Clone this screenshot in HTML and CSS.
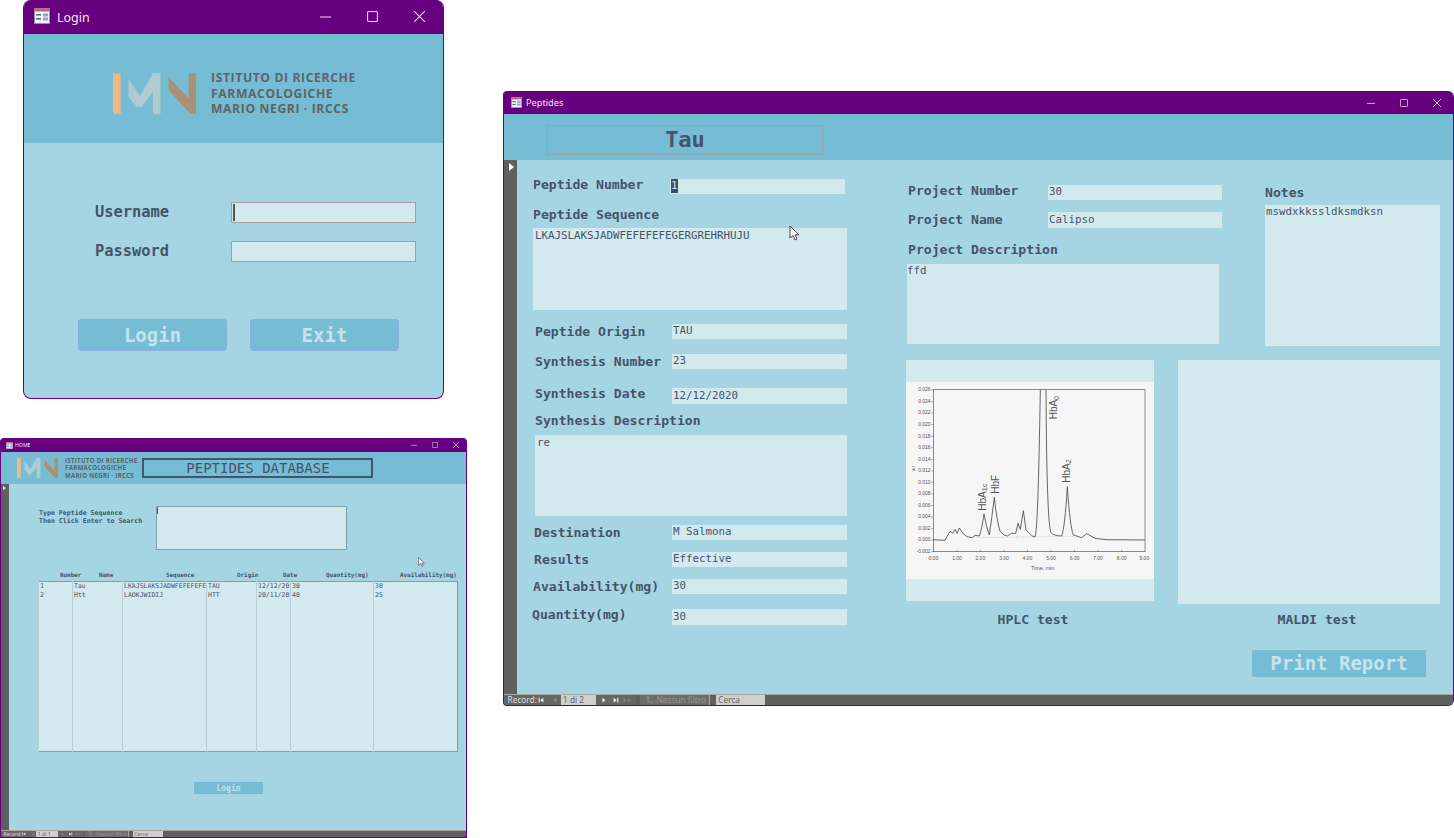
FILE: index.html
```html
<!DOCTYPE html>
<html lang="en">
<head>
    <meta charset="UTF-8">
    <meta name="viewport" content="width=device-width, initial-scale=1.0">
    <title>Peptides Database</title>
    <link rel="stylesheet" href="styles.css">
</head>
<body>

    <svg class="defs" aria-hidden="true">
        <symbol id="form-icon" viewBox="0 0 16 16">
            <rect x="0.5" y="0.5" width="15" height="15" fill="#f4f6fb" stroke="#8c93a8"/>
            <rect x="0.5" y="0.5" width="15" height="3" fill="#c8607c"/>
            <rect x="2" y="6" width="5" height="1.6" fill="#5a6a8c"/>
            <rect x="2" y="10" width="5" height="1.6" fill="#5a6a8c"/>
            <rect x="9" y="5.5" width="5" height="3" fill="#8ea4c8"/>
            <rect x="9" y="9.5" width="5" height="3" fill="#8ea4c8"/>
        </symbol>
        <symbol id="min-icon" viewBox="0 0 10 10">
            <path d="M0 5.5H10" stroke="#e8dcef" fill="none"/>
        </symbol>
        <symbol id="max-icon" viewBox="0 0 10 10">
            <rect x="0.5" y="0.5" width="9" height="9" rx="1" stroke="#e8dcef" fill="none"/>
        </symbol>
        <symbol id="close-icon" viewBox="0 0 10 10">
            <path d="M0 0L10 10M10 0L0 10" stroke="#e8dcef" fill="none"/>
        </symbol>
        <symbol id="imn-logo" viewBox="24 25 248 121">
            <rect x="24" y="25" width="23" height="121" fill="#eeb985"/>
            <polygon points="70,42 105,92 143,25 166,25 166,146 143,146 143,80 110,125 95,125 70,95" fill="#aecbcf"/>
            <polygon points="190,36 250,100 250,25 272,25 272,146 255,146 190,75" fill="#a99274"/>
        </symbol>
        <symbol id="pointer" viewBox="0 0 11 16">
            <path d="M1 1V13L4 10.4L6 15L8 14L6 9.8H10Z" fill="#fff" stroke="#333" stroke-width="0.9"/>
        </symbol>
        <symbol id="nav-first" viewBox="0 0 8 8">
            <path d="M1 1H2.4V7H1ZM7 1V7L3 4Z"/>
        </symbol>
        <symbol id="nav-prev" viewBox="0 0 8 8">
            <path d="M6 1V7L2 4Z"/>
        </symbol>
        <symbol id="nav-next" viewBox="0 0 8 8">
            <path d="M2 1V7L6 4Z"/>
        </symbol>
        <symbol id="nav-last" viewBox="0 0 8 8">
            <path d="M1 1V7L5 4ZM5.6 1H7V7H5.6Z"/>
        </symbol>
        <symbol id="nav-new" viewBox="0 0 10 8">
            <path d="M0.5 1V7L4 4ZM7.5 1.5L8.2 3.3L10 4L8.2 4.7L7.5 6.5L6.8 4.7L5 4L6.8 3.3Z"/>
        </symbol>
        <symbol id="filter-icon" viewBox="0 0 10 10">
            <path d="M0.5 0.5H7L4.6 4V8.5L3 9.5V4Z" fill="#888"/>
            <path d="M5.5 5.5L9.5 9.5M9.5 5.5L5.5 9.5" stroke="#888" fill="none"/>
        </symbol>
    </svg>

    <!-- Login window -->
    <div class="window win-login">
        <div class="titlebar">
            <svg class="app-icon"><use href="#form-icon"/></svg>
            <span class="win-title">Login</span>
            <div class="controls">
                <span class="ctl"><svg><use href="#min-icon"/></svg></span>
                <span class="ctl"><svg><use href="#max-icon"/></svg></span>
                <span class="ctl"><svg><use href="#close-icon"/></svg></span>
            </div>
        </div>
        <div class="login-head">
            <svg class="logo-mark"><use href="#imn-logo"/></svg>
            <div class="logo-text">
                <div>ISTITUTO DI RICERCHE</div>
                <div>FARMACOLOGICHE</div>
                <div>MARIO NEGRI · IRCCS</div>
            </div>
        </div>
        <div class="login-body">
            <div class="login-row">
                <span class="login-label">Username</span>
                <div class="login-input"><span class="caret"></span></div>
            </div>
            <div class="login-row login-row-2">
                <span class="login-label">Password</span>
                <div class="login-input"></div>
            </div>
            <div class="login-buttons">
                <button class="login-btn">Login</button>
                <button class="login-btn">Exit</button>
            </div>
        </div>
    </div>

    <!-- Home window -->
    <div class="window win-home">
        <div class="titlebar">
            <svg class="app-icon"><use href="#form-icon"/></svg>
            <span class="win-title">HOME</span>
            <div class="controls">
                <span class="ctl"><svg><use href="#min-icon"/></svg></span>
                <span class="ctl"><svg><use href="#max-icon"/></svg></span>
                <span class="ctl"><svg><use href="#close-icon"/></svg></span>
            </div>
        </div>
        <div class="home-head">
            <svg class="logo-mark"><use href="#imn-logo"/></svg>
            <div class="logo-text">
                <div>ISTITUTO DI RICERCHE</div>
                <div>FARMACOLOGICHE</div>
                <div>MARIO NEGRI · IRCCS</div>
            </div>
            <div class="home-title">PEPTIDES DATABASE</div>
        </div>
        <div class="main">
            <div class="selector"><span class="sel-arrow"></span></div>
            <div class="home-form">
                <div class="search-row">
                    <div class="search-label">Type Peptide Sequence<br>Then Click Enter to Search</div>
                    <div class="search-box"><span class="search-caret"></span></div>
                </div>
                <div class="list-head">
                    <span>Number</span>
                    <span>Name</span>
                    <span>Sequence</span>
                    <span>Origin</span>
                    <span>Date</span>
                    <span>Quantity(mg)</span>
                    <span>Availability(mg)</span>
                </div>
                <table class="list">
                    <colgroup>
                        <col class="c-num"><col class="c-name"><col class="c-seq"><col class="c-origin"><col class="c-date"><col class="c-qty"><col>
                    </colgroup>
                    <tr class="list-row">
                        <td>1</td><td>Tau</td><td>LKAJSLAKSJADWFEFEFEFE</td><td>TAU</td><td>12/12/20</td><td>30</td><td>30</td>
                    </tr>
                    <tr class="list-row">
                        <td>2</td><td>Htt</td><td>LAOKJWIDIJ</td><td>HTT</td><td>20/11/20</td><td>40</td><td>25</td>
                    </tr>
                    <tr>
                        <td></td><td></td><td></td><td></td><td></td><td></td><td></td>
                    </tr>
                </table>
                <button class="home-btn">Login</button>
            </div>
            <svg class="pointer pointer-home"><use href="#pointer"/></svg>
        </div>
        <div class="status status-small">
            <div class="st-record">
                <span class="st-label">Record:</span>
                <svg class="st-nav"><use href="#nav-first"/></svg>
                <svg class="st-nav st-dim st-gap"><use href="#nav-prev"/></svg>
                <span class="st-box st-count">1 di 1</span>
                <svg class="st-nav st-dim st-gap"><use href="#nav-next"/></svg>
                <svg class="st-nav"><use href="#nav-last"/></svg>
                <svg class="st-nav st-dim"><use href="#nav-new"/></svg>
            </div>
            <div class="st-filter"><svg class="st-funnel"><use href="#filter-icon"/></svg>Nessun filtro</div>
            <span class="st-box st-search">Cerca</span>
        </div>
    </div>

    <!-- Peptides window -->
    <div class="window win-pep">
        <div class="titlebar">
            <svg class="app-icon"><use href="#form-icon"/></svg>
            <span class="win-title">Peptides</span>
            <div class="controls">
                <span class="ctl"><svg><use href="#min-icon"/></svg></span>
                <span class="ctl"><svg><use href="#max-icon"/></svg></span>
                <span class="ctl"><svg><use href="#close-icon"/></svg></span>
            </div>
        </div>
        <div class="pep-head">
            <div class="pep-name">Tau</div>
        </div>
        <div class="main">
            <div class="selector"><span class="sel-arrow"></span></div>
            <div class="pep-form">
                <div class="col-left">
                    <div class="row row-number">
                        <span class="lbl lbl-in1 lbl-up">Peptide Number</span>
                        <div class="field field-short"><span class="selected">1</span></div>
                    </div>
                    <div class="lbl lbl-in1 head-seq">Peptide Sequence</div>
                    <div class="memo memo-seq">LKAJSLAKSJADWFEFEFEFEGERGREHRHUJU</div>

                    <div class="row row-origin">
                        <span class="lbl lbl-in3">Peptide Origin</span>
                        <div class="field">TAU</div>
                    </div>
                    <div class="row row-synth">
                        <span class="lbl lbl-in3">Synthesis Number</span>
                        <div class="field">23</div>
                    </div>
                    <div class="row row-date">
                        <span class="lbl lbl-in3 lbl-up">Synthesis Date</span>
                        <div class="field field-tall">12/12/2020</div>
                    </div>
                    <div class="lbl lbl-in3 head-desc">Synthesis Description</div>
                    <div class="memo memo-desc">re</div>

                    <div class="row row-dest">
                        <span class="lbl lbl-in2">Destination</span>
                        <div class="field">M Salmona</div>
                    </div>
                    <div class="row row-results">
                        <span class="lbl lbl-in2">Results</span>
                        <div class="field">Effective</div>
                    </div>
                    <div class="row row-results">
                        <span class="lbl lbl-in1">Availability(mg)</span>
                        <div class="field">30</div>
                    </div>
                    <div class="row row-qty">
                        <span class="lbl lbl-up">Quantity(mg)</span>
                        <div class="field field-tall">30</div>
                    </div>
                </div>

                <div class="col-right">
                    <div class="right-top">
                        <div class="project">
                            <div class="row">
                                <span class="lbl lbl-in2 lbl-up">Project Number</span>
                                <div class="field field-project">30</div>
                            </div>
                            <div class="row row-pname">
                                <span class="lbl lbl-in2">Project Name</span>
                                <div class="field field-project field-tall">Calipso</div>
                            </div>
                            <div class="lbl lbl-in2 head-pdesc">Project Description</div>
                            <div class="memo memo-pdesc">ffd</div>
                        </div>
                        <div class="notes">
                            <div class="lbl">Notes</div>
                            <div class="memo memo-notes">mswdxkkssldksmdksn</div>
                        </div>
                    </div>
                    <div class="right-bottom">
                        <div class="test test-hplc">
                            <div class="hplc-frame">
                                <svg class="chart" viewBox="18 36 744 591">
                                    <rect x="18" y="36" width="744" height="591" fill="#f6f6f6"/>
                                    <rect x="100" y="59" width="635" height="486" fill="none" stroke="#555" stroke-width="2"/>
                                    <path class="ticks" d="M94 60H100M94 94.6H100M94 129.3H100M94 163.9H100M94 198.6H100M94 233.2H100M94 267.9H100M94 302.5H100M94 337.1H100M94 371.8H100M94 406.4H100M94 441.1H100M94 475.7H100M94 510.4H100M94 545H100M170.6 545V539M241.2 545V539M311.8 545V539M382.4 545V539M453 545V539M523.6 545V539M594.2 545V539M664.8 545V539"/>
                                    <g class="y-labels">
                                        <text x="92" y="64">0.026</text>
                                        <text x="92" y="99">0.024</text>
                                        <text x="92" y="133">0.022</text>
                                        <text x="92" y="168">0.020</text>
                                        <text x="92" y="203">0.018</text>
                                        <text x="92" y="237">0.016</text>
                                        <text x="92" y="272">0.014</text>
                                        <text x="92" y="307">0.012</text>
                                        <text x="92" y="341">0.010</text>
                                        <text x="92" y="376">0.008</text>
                                        <text x="92" y="410">0.006</text>
                                        <text x="92" y="445">0.004</text>
                                        <text x="92" y="480">0.002</text>
                                        <text x="92" y="514">0.000</text>
                                        <text x="92" y="549">-0.002</text>
                                    </g>
                                    <g class="x-labels">
                                        <text x="100" y="570">0.00</text>
                                        <text x="171" y="570">1.00</text>
                                        <text x="241" y="570">2.00</text>
                                        <text x="312" y="570">3.00</text>
                                        <text x="382" y="570">4.00</text>
                                        <text x="453" y="570">5.00</text>
                                        <text x="524" y="570">6.00</text>
                                        <text x="594" y="570">7.00</text>
                                        <text x="665" y="570">8.00</text>
                                        <text x="733" y="570">9.00</text>
                                    </g>
                                    <text class="axis-name" x="428" y="601">Time, min</text>
                                    <text class="axis-unit" transform="translate(45 303) rotate(-90)">AU</text>
                                    <path class="base" d="M222 503L520 499"/>
                                    <path class="base" d="M354 462V503"/>
                                    <path class="trace" d="M100 509L135 511Q140 500 150 484L158 490L165 478L171 490L178 474L190 492Q200 503 216 503L225 496L238 498Q245 480 252 432Q258 470 268 495Q276 440 283 382Q290 450 300 484Q312 498 322 498L335 490L347 490L354 460L361 478L370 422L378 480L395 497L405 501Q414 490 421 58M438 58Q440 440 452 487Q462 498 485 498Q495 470 502 350Q510 470 520 495L545 503L560 491L585 505L620 509L735 510"/>
                                    <g class="peak-labels">
                                        <text transform="translate(257 422) rotate(-90)">HbA<tspan class="sub" dy="5">1c</tspan></text>
                                        <text transform="translate(296 371) rotate(-90)">HbF</text>
                                        <text transform="translate(471 148) rotate(-90)">HbA<tspan class="sub" dy="5">0</tspan></text>
                                        <text transform="translate(509 338) rotate(-90)">HbA<tspan class="sub" dy="5">2</tspan></text>
                                    </g>
                                </svg>
                            </div>
                            <div class="lbl caption">HPLC test</div>
                        </div>
                        <div class="test test-maldi">
                            <div class="maldi-frame"></div>
                            <div class="lbl caption">MALDI test</div>
                        </div>
                    </div>
                    <button class="print-btn">Print Report</button>
                </div>
            </div>
            <svg class="pointer pointer-pep"><use href="#pointer"/></svg>
        </div>
        <div class="status">
            <div class="st-record">
                <span class="st-label">Record:</span>
                <svg class="st-nav"><use href="#nav-first"/></svg>
                <svg class="st-nav st-dim st-gap"><use href="#nav-prev"/></svg>
                <span class="st-box st-count">1 di 2</span>
                <svg class="st-nav st-gap"><use href="#nav-next"/></svg>
                <svg class="st-nav"><use href="#nav-last"/></svg>
                <svg class="st-nav st-dim"><use href="#nav-new"/></svg>
            </div>
            <div class="st-filter"><svg class="st-funnel"><use href="#filter-icon"/></svg>Nessun filtro</div>
            <span class="st-box st-search">Cerca</span>
        </div>
    </div>

</body>
</html>
```

FILE: styles.css
```css
body {
    margin: 0;
    height: 838px;
    overflow: hidden;
    background-color: #fff;
    font-family: "DejaVu Sans Mono", monospace;
    color: #44546a;
}

.defs {
    position: absolute;
    width: 0;
    height: 0;
}

/* windows sit on a free desktop */
.window {
    position: absolute;
    box-sizing: border-box;
    display: flex;
    flex-direction: column;
    background-color: #a5d5e2;
    border: 1px solid #66007f;
    border-top: none;
    overflow: hidden;
}

.win-login {
    left: 23px;
    top: 0;
    width: 421px;
    height: 399px;
    border-radius: 8px;
}

.win-home {
    left: 0;
    top: 438px;
    width: 467px;
    height: 400px;
    border-radius: 4px 4px 0 0;
}

.win-pep {
    left: 503px;
    top: 91px;
    width: 951px;
    height: 615px;
    border-radius: 4px 6px 6px 4px;
}

.titlebar {
    display: flex;
    align-items: center;
    flex: none;
    background-color: #66007f;
    color: #f1e6f5;
    font-family: "Noto Sans", sans-serif;
}

.controls {
    display: flex;
    margin-left: auto;
}

.ctl {
    display: flex;
    align-items: center;
    justify-content: center;
}

.win-login .titlebar { height: 34px; padding-left: 10px; }
.win-login .app-icon { width: 16px; height: 16px; margin-top: -3px; }
.win-login .win-title { font-size: 12.5px; margin-left: 7px; }
.win-login .ctl { width: 47px; }
.win-login .ctl svg { width: 11px; height: 11px; margin-top: -2px; }

.win-home .titlebar { height: 14px; padding-left: 5px; }
.win-home .app-icon { width: 7px; height: 7px; }
.win-home .win-title { font-size: 5.2px; margin-left: 2px; }
.win-home .ctl { width: 21px; }
.win-home .ctl svg { width: 6px; height: 6px; }

.win-pep .titlebar { height: 23px; padding-left: 7px; }
.win-pep .app-icon { width: 11px; height: 11px; }
.win-pep .win-title { font-size: 9.2px; margin-left: 4px; }
.win-pep .ctl { width: 33px; }
.win-pep .ctl svg { width: 8px; height: 8px; }

.logo-text {
    font-family: "Open Sans", sans-serif;
    font-weight: 700;
    color: #5f6468;
}

/* login */
.login-head {
    box-sizing: border-box;
    display: flex;
    align-items: center;
    height: 109px;
    padding-top: 10px;
    flex: none;
    background-color: #75bcd4;
}

.login-head .logo-mark {
    width: 83px;
    height: 41px;
    margin-left: 89px;
}

.login-head .logo-text {
    margin-left: 15px;
    font-size: 12.2px;
    line-height: 15.5px;
    letter-spacing: 0.6px;
}

.login-body {
    padding: 59px 0 0 71px;
}

.login-row {
    display: flex;
    align-items: center;
    justify-content: space-between;
    width: 321px;
}

.login-row-2 {
    margin-top: 18px;
}

.login-label {
    padding-bottom: 2px;
    font-size: 15.4px;
    font-weight: 700;
}

.login-input {
    box-sizing: border-box;
    width: 185px;
    height: 21px;
    padding: 1px;
    background-color: #d2e9ee;
    border: 1px solid #a0a0a0;
}

.caret {
    display: block;
    width: 2px;
    height: 100%;
    background-color: #555;
}

.login-buttons {
    display: flex;
    gap: 23px;
    margin: 57px 0 0 -17px;
}

.login-btn {
    width: 149px;
    height: 32px;
    padding: 0;
    background-color: #75bcd4;
    border: 1px solid #8aaee0;
    border-radius: 3px;
    font-family: "DejaVu Sans Mono", monospace;
    font-size: 19px;
    font-weight: 700;
    color: #c4e3ec;
}

/* record layout shared by home and peptides */
.main {
    position: relative;
    display: flex;
    flex: 1;
    min-height: 0;
}

.selector {
    flex: none;
    background-color: #5f5f5f;
}

.sel-arrow {
    display: block;
    width: 0;
    height: 0;
    border-style: solid;
    border-color: transparent transparent transparent #fff;
}

.win-pep .selector { width: 13px; }
.win-pep .sel-arrow { margin: 3px 0 0 5px; border-width: 4px 0 4px 5px; }
.win-home .selector { width: 8px; }
.win-home .sel-arrow { margin: 2px 0 0 2px; border-width: 2.5px 0 2.5px 3px; }

.pointer {
    position: absolute;
}

.pointer-pep {
    left: 285px;
    top: 65px;
    width: 11px;
    height: 16px;
}

.pointer-home {
    left: 417px;
    top: 73px;
    width: 7px;
    height: 10px;
}

/* home */
.home-head {
    display: flex;
    align-items: center;
    flex: none;
    height: 32px;
    padding-left: 16px;
    background-color: #75bcd4;
}

.home-head .logo-mark {
    width: 41px;
    height: 20px;
}

.home-head .logo-text {
    margin-left: 7px;
    font-size: 6.1px;
    line-height: 7.6px;
    letter-spacing: 0.3px;
}

.home-title {
    box-sizing: border-box;
    width: 231px;
    height: 20px;
    margin-left: 5px;
    border: 2px solid #44546a;
    font-size: 14px;
    line-height: 16px;
    text-align: center;
}

.home-form {
    flex: 1;
    padding: 22px 0 0 30px;
}

.search-row {
    display: flex;
}

.search-label {
    width: 117px;
    padding-top: 4px;
    font-size: 6.6px;
    font-weight: 700;
    line-height: 7.7px;
}

.search-box {
    box-sizing: border-box;
    width: 191px;
    height: 44px;
    background-color: #d2e9ee;
    border: 1px solid #7d9fb2;
}

.search-caret {
    display: block;
    width: 1px;
    height: 7px;
    background-color: #555;
}

.list-head {
    display: grid;
    grid-template-columns: 39px 67px 71px 46px 43px 74px auto;
    margin: 22px 0 0 21px;
    font-size: 5.9px;
    font-weight: 700;
    line-height: 6px;
    white-space: nowrap;
}

.list {
    box-sizing: border-box;
    width: 420px;
    height: 171px;
    margin: 3px 0 0 -1px;
    table-layout: fixed;
    border-collapse: collapse;
    background-color: #d2e9ee;
    border: 1px solid #7d9fb2;
    font-size: 6.5px;
}

.c-num { width: 34px; }
.c-name { width: 50px; }
.c-seq { width: 84px; }
.c-origin { width: 50px; }
.c-date { width: 34px; }
.c-qty { width: 83px; }

.list td {
    padding: 0 0 0 1px;
    overflow: hidden;
    white-space: nowrap;
    border-left: 1px solid #b9ced6;
    line-height: 9px;
}

.list-row {
    height: 9px;
}

.home-btn {
    display: block;
    width: 69px;
    height: 12px;
    margin: 30px 0 0 155px;
    padding: 0;
    background-color: #75bcd4;
    border: none;
    border-radius: 1px;
    font-family: "DejaVu Sans Mono", monospace;
    font-size: 8px;
    font-weight: 700;
    color: #c4e3ec;
}

/* peptides */
.pep-head {
    flex: none;
    height: 46px;
    padding: 11px 0 0 43px;
    box-sizing: border-box;
    background-color: #75bcd4;
}

.pep-name {
    box-sizing: border-box;
    width: 276px;
    height: 30px;
    border: 1px solid #90a8ae;
    font-size: 22px;
    font-weight: 700;
    line-height: 28px;
    text-align: center;
}

.pep-form {
    display: flex;
    flex: 1;
    padding-left: 15px;
}

.col-left {
    width: 315px;
    padding-top: 19px;
}

.col-right {
    width: 534px;
    margin-left: 59px;
    padding-top: 25px;
}

.row {
    display: flex;
    align-items: center;
    justify-content: space-between;
}

.lbl {
    font-size: 13.1px;
    font-weight: 700;
    line-height: 14px;
    white-space: nowrap;
}

.lbl-in1 { margin-left: 1px; }
.lbl-in2 { margin-left: 2px; }
.lbl-in3 { margin-left: 3px; }
.lbl-up { position: relative; top: -2px; }

.field,
.memo {
    box-sizing: border-box;
    background-color: #d2e9ee;
    font-size: 10.8px;
    color: #44546a;
    white-space: nowrap;
}

.field {
    width: 175px;
    height: 15px;
    padding-left: 1px;
    line-height: 14px;
}

.field-tall {
    height: 16px;
    line-height: 15px;
}

.field-project {
    width: 174px;
}

.selected {
    display: inline-block;
    background-color: #3f4d66;
    color: #d2e9ee;
}

.memo {
    padding: 1px 0 0 1px;
    line-height: 12px;
}

.row-number { width: 313px; }
.head-seq { margin-top: 14px; }
.memo-seq { width: 314px; height: 82px; margin: 6px 0 0 1px; padding: 2px 0 0 2px; }
.row-origin { margin-top: 14px; }
.row-synth { margin-top: 15px; }
.row-date { margin-top: 19px; }
.head-desc { margin-top: 10px; }
.memo-desc { width: 312px; height: 81px; margin: 7px 0 0 3px; padding: 2px 0 0 2px; }
.row-dest { margin-top: 9px; }
.row-results { margin-top: 12px; }
.row-qty { margin-top: 15px; }

.right-top {
    display: flex;
    justify-content: space-between;
    height: 175px;
}

.project {
    width: 316px;
}

.row-pname { margin-top: 12px; }
.head-pdesc { margin-top: 15px; }
.memo-pdesc { width: 312px; height: 80px; margin: 7px 0 0 1px; padding-left: 0; }

.notes {
    width: 175px;
    padding-top: 1px;
}

.memo-notes {
    height: 141px;
    margin-top: 5px;
}

.right-bottom {
    display: flex;
    gap: 24px;
}

.test-hplc { width: 248px; }
.test-maldi { width: 262px; }

.hplc-frame {
    box-sizing: border-box;
    height: 241px;
    padding-top: 22px;
    background-color: #d2e9ee;
}

.chart {
    display: block;
    width: 248px;
    height: 197px;
}

.maldi-frame {
    height: 244px;
    background-color: #d2e9ee;
}

.caption {
    text-align: center;
}

.test-hplc .caption { margin-top: 12px; padding-left: 6px; }
.test-maldi .caption { margin-top: 9px; padding-left: 16px; }

.ticks { stroke: #555; stroke-width: 1.5; fill: none; }
.y-labels text { font: 15px "Liberation Sans", sans-serif; fill: #555; text-anchor: end; }
.x-labels text { font: 15px "Liberation Sans", sans-serif; fill: #555; text-anchor: middle; }
.axis-name { font: 16px "Liberation Sans", sans-serif; fill: #555; text-anchor: middle; }
.axis-unit { font: 10px "Liberation Sans", sans-serif; fill: #555; }
.base { stroke: #999; stroke-width: 1.5; stroke-dasharray: 3 4; fill: none; }
.trace { stroke: #444; stroke-width: 2.4; stroke-linejoin: round; fill: none; }
.peak-labels text { font: 30px "Liberation Sans", sans-serif; fill: #555; }
.peak-labels .sub { font-size: 22px; }

.print-btn {
    display: block;
    width: 174px;
    height: 27px;
    margin: 23px 0 0 346px;
    padding: 0 0 2px;
    background-color: #75bcd4;
    border: none;
    border-radius: 1px;
    font-family: "DejaVu Sans Mono", monospace;
    font-size: 19px;
    font-weight: 700;
    color: #c4e3ec;
}

/* record navigation bar, sized in em so both windows share it */
.status {
    display: flex;
    align-items: stretch;
    flex: none;
    height: 1.1em;
    background-color: #5f5f5f;
    border-top: 1px solid #aaa8a4;
    font-family: "Noto Sans", sans-serif;
    font-size: 9px;
    line-height: 1.1em;
    color: #ddd;
    white-space: nowrap;
}

.status-small {
    font-size: 5.6px;
}

.st-record {
    box-sizing: border-box;
    display: flex;
    align-items: center;
    flex: none;
    width: 14.67em;
    padding-left: 0.4em;
    background-color: #666;
}

.st-label {
    flex: none;
    width: 3.3em;
    font-size: 0.92em;
}

.st-nav {
    flex: none;
    width: 1.33em;
    height: 0.7em;
    fill: #eee;
}

.st-dim {
    fill: #8a8a8a;
}

.st-gap {
    margin-left: 0.2em;
}

.st-box {
    box-sizing: border-box;
    flex: none;
    padding-left: 0.3em;
    background-color: #cfcfcf;
    font-size: 0.92em;
    color: #666;
}

.st-count {
    align-self: stretch;
    width: 4.24em;
}

.st-filter {
    box-sizing: border-box;
    display: flex;
    align-items: center;
    flex: none;
    width: 8.48em;
    margin-left: 0.43em;
    padding-left: 0.6em;
    background-color: #6d6d6d;
    border-right: 1px solid #aaa8a4;
    font-size: 0.92em;
    color: #939393;
}

.st-funnel {
    flex: none;
    width: 1em;
    height: 1em;
    margin-right: 0.45em;
}

.st-search {
    width: 5.92em;
    margin-left: 0.73em;
}
```
